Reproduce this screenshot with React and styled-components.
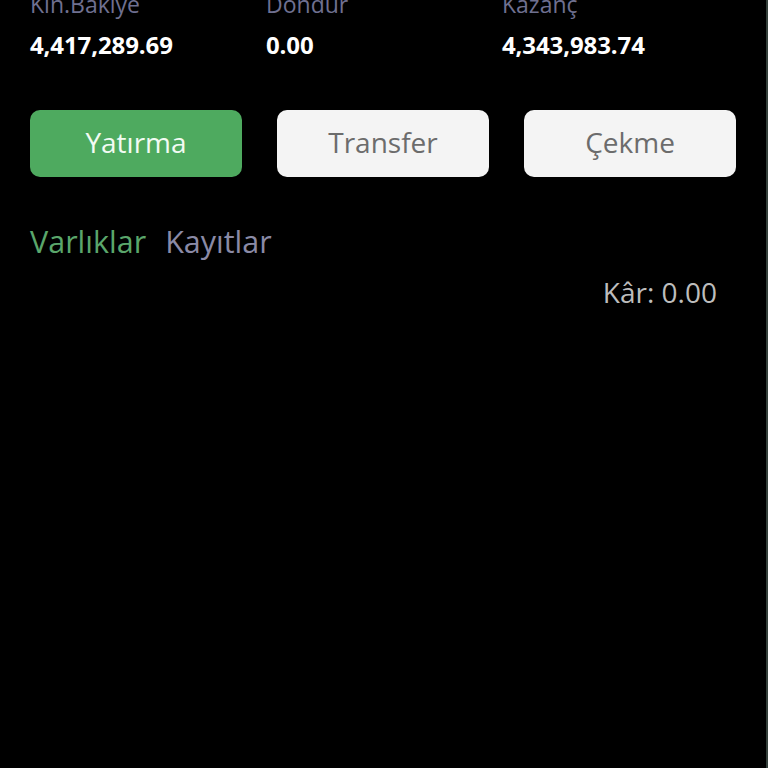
import React, { useState } from 'react';
import styled, { createGlobalStyle } from 'styled-components';

const GlobalStyle = createGlobalStyle`
  html, body {
    margin: 0;
    padding: 0;
    background: #000;
  }
  body {
    font-family: "Open Sans", "Noto Sans", sans-serif;
  }
`;

const Page = styled.div`
  box-sizing: border-box;
  width: 768px;
  height: 768px;
  overflow: hidden;
  background: #000;
  border-right: 2px solid #34403b;
  padding: 0 30px;
`;

const Stats = styled.div`
  display: grid;
  grid-template-columns: 236px 236px 236px;
  margin-top: -10px;
`;

const Stat = styled.div`
  display: flex;
  flex-direction: column;
`;

const Label = styled.div`
  font-size: 23px;
  line-height: 28px;
  color: #6f7090;
`;

const Value = styled.div`
  font-size: 24px;
  font-weight: 700;
  line-height: 34px;
  margin-top: 10px;
  color: #fff;
  letter-spacing: -0.1px;
`;

const Actions = styled.div`
  display: grid;
  grid-template-columns: repeat(3, 1fr);
  column-gap: 35px;
  margin-top: 48px;
`;

const ActionButton = styled.button`
  height: 67px;
  padding: 0 0 4px;
  border: none;
  border-radius: 10px;
  font-family: inherit;
  font-size: 28px;
  background: ${p => (p.$primary ? '#4eaa5f' : '#f4f4f4')};
  color: ${p => (p.$primary ? '#f2fbf3' : '#6c6c6c')};
  cursor: pointer;
`;

const Tabs = styled.div`
  display: flex;
  gap: 19px;
  margin-top: 44px;
`;

const Tab = styled.div`
  font-size: 30.5px;
  line-height: 40px;
  color: ${p => (p.$active ? '#5aa66b' : '#8a8aa6')};
  cursor: pointer;
`;

const Profit = styled.div`
  display: flex;
  justify-content: flex-end;
  padding-right: 19px;
  margin-top: 11px;
  font-size: 28px;
  line-height: 40px;
  color: #bdbdbd;
`;

const stats = [
  { label: 'Kln.Bakiye', value: '4,417,289.69' },
  { label: 'Dondur', value: '0.00' },
  { label: 'Kazanç', value: '4,343,983.74' },
];

export default function App() {
  const [tab, setTab] = useState('assets');

  return (
    <>
      <GlobalStyle />
      <Page>
        <Stats>
          {stats.map(s => (
            <Stat key={s.label}>
              <Label>{s.label}</Label>
              <Value>{s.value}</Value>
            </Stat>
          ))}
        </Stats>
        <Actions>
          <ActionButton $primary>Yatırma</ActionButton>
          <ActionButton>Transfer</ActionButton>
          <ActionButton>Çekme</ActionButton>
        </Actions>
        <Tabs>
          <Tab $active={tab === 'assets'} onClick={() => setTab('assets')}>
            Varlıklar
          </Tab>
          <Tab $active={tab === 'records'} onClick={() => setTab('records')}>
            Kayıtlar
          </Tab>
        </Tabs>
        <Profit>Kâr: 0.00</Profit>
      </Page>
    </>
  );
}
